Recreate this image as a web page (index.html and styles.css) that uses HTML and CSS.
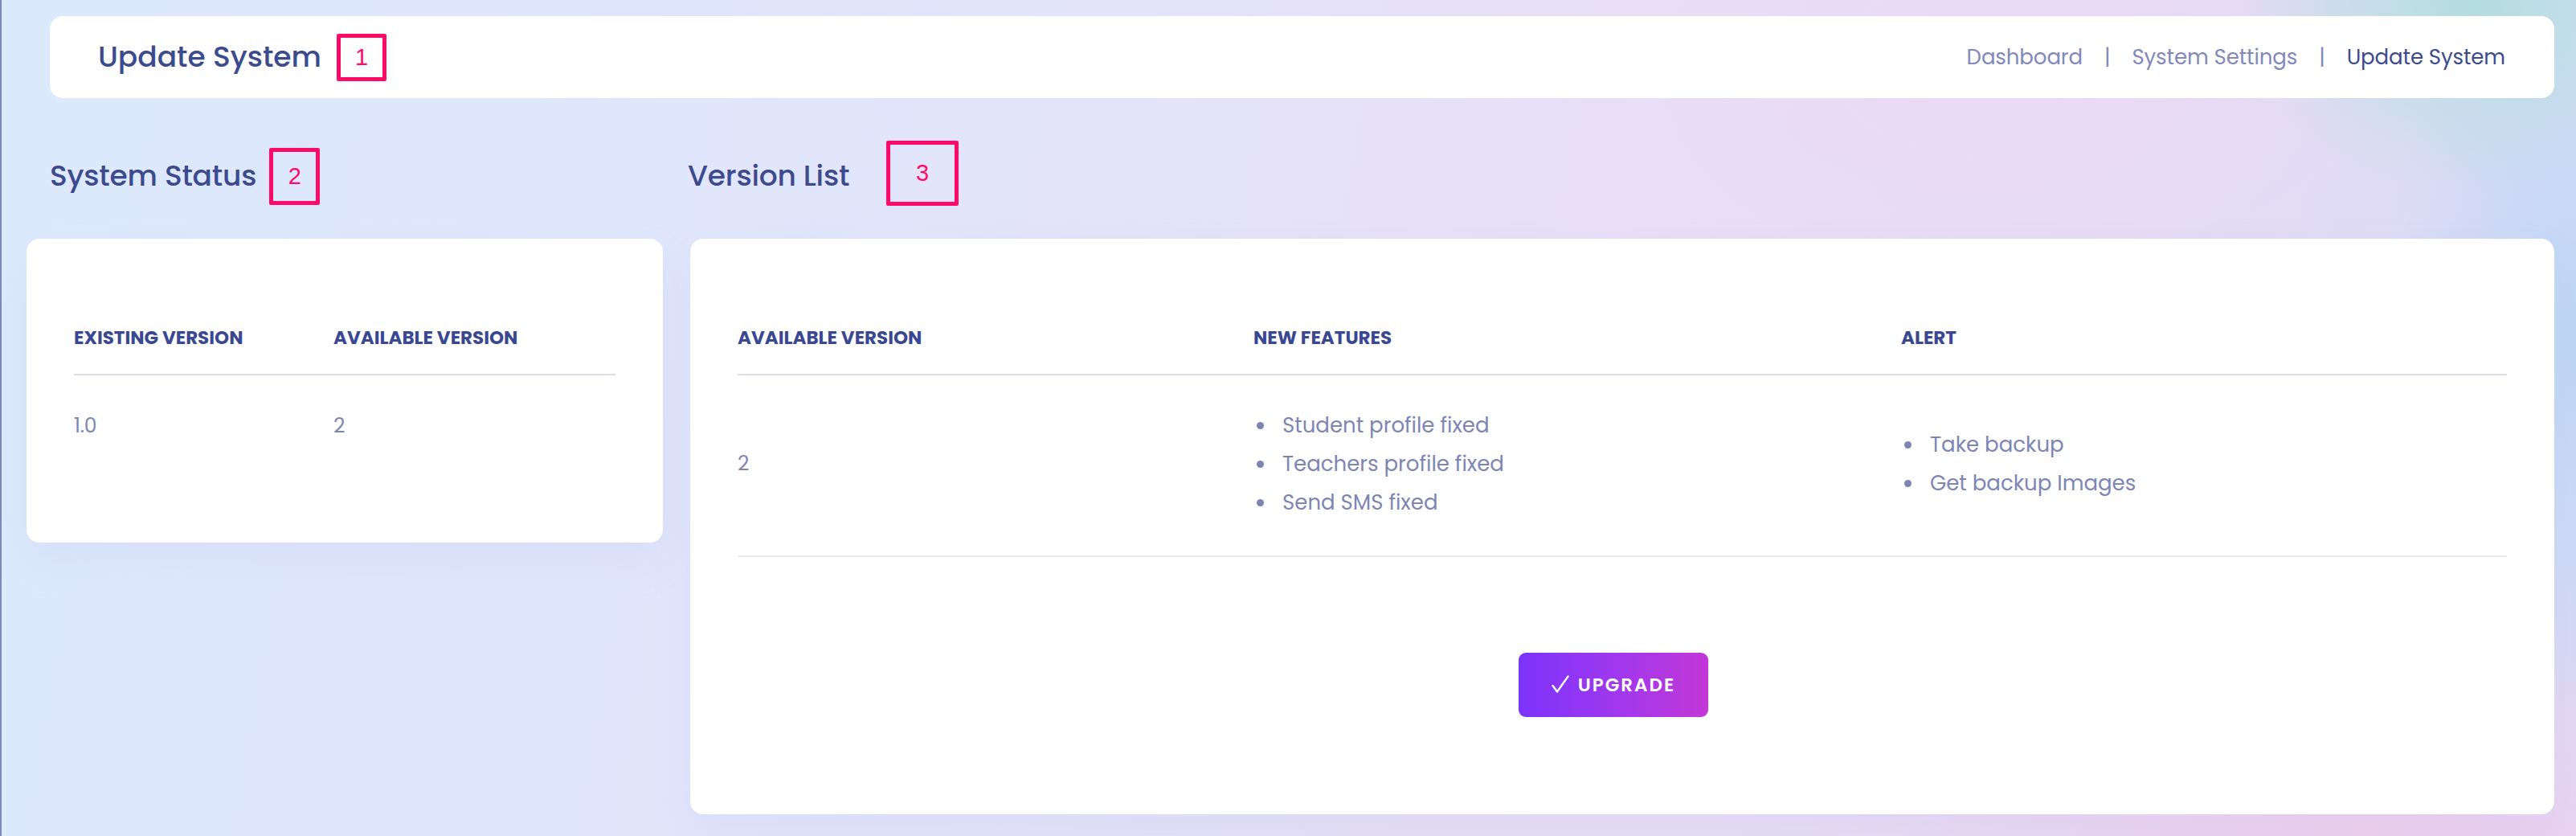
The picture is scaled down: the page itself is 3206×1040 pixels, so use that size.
FILE: index.html
```html
<!DOCTYPE html>
<html lang="en">
<head>
<meta charset="utf-8">
<title>Update System</title>
<link rel="stylesheet" href="styles.css">
</head>
<body>
<div class="page">
  <header class="topbar">
    <div class="title-wrap">
      <h1 class="page-title">Update System</h1>
      <span class="tag tag-1">1</span>
    </div>
    <nav class="crumbs">
      <a class="crumb">Dashboard</a>
      <span class="sep">|</span>
      <a class="crumb">System Settings</a>
      <span class="sep">|</span>
      <span class="crumb current">Update System</span>
    </nav>
  </header>

  <main class="columns">
    <section class="col col-status">
      <div class="section-head head-status">
        <h2 class="section-title">System Status</h2>
        <span class="tag tag-2">2</span>
      </div>
      <div class="card card-status">
        <table class="data status-table">
          <thead>
            <tr><th class="c-existing">EXISTING VERSION</th><th>AVAILABLE VERSION</th></tr>
          </thead>
          <tbody>
            <tr><td>1.0</td><td>2</td></tr>
          </tbody>
        </table>
      </div>
    </section>

    <section class="col col-versions">
      <div class="section-head head-versions">
        <h2 class="section-title">Version List</h2>
        <span class="tag tag-3">3</span>
      </div>
      <div class="card card-versions">
        <table class="data version-table">
          <thead>
            <tr><th class="c-ver">AVAILABLE VERSION</th><th class="c-feat">NEW FEATURES</th><th>ALERT</th></tr>
          </thead>
          <tbody>
            <tr>
              <td>2</td>
              <td>
                <ul class="bullets">
                  <li>Student profile fixed</li>
                  <li>Teachers profile fixed</li>
                  <li>Send SMS fixed</li>
                </ul>
              </td>
              <td>
                <ul class="bullets">
                  <li>Take backup</li>
                  <li>Get backup Images</li>
                </ul>
              </td>
            </tr>
          </tbody>
        </table>
        <div class="actions">
          <button class="btn-upgrade" type="button">
            <svg class="check" width="22" height="22" viewBox="0 0 22 22" aria-hidden="true">
              <polyline points="1.5,13 7,20.5 20.5,1.5" fill="none" stroke="#ffffff" stroke-width="2.4" stroke-linecap="round" stroke-linejoin="round"/>
            </svg>
            <span>UPGRADE</span>
          </button>
        </div>
      </div>
    </section>
  </main>
</div>
</body>
</html>
```

FILE: styles.css
```css
html, body {
  margin: 0;
  padding: 0;
  height: 100%;
}

body {
  font-family: "Poppins", "Inter", "Noto Sans", sans-serif;
  border-left: 2px solid #7f87b6;
  box-sizing: border-box;
  overflow: hidden;
  background:
    radial-gradient(ellipse 300px 240px at 96% 0%, rgba(176, 222, 222, 0.95), rgba(176, 222, 222, 0) 100%),
    radial-gradient(ellipse 240px 480px at 100% 40%, rgba(188, 214, 246, 0.95), rgba(188, 214, 246, 0) 100%),
    radial-gradient(ellipse 700px 300px at 92% 100%, rgba(241, 206, 238, 0.95), rgba(241, 206, 238, 0) 100%),
    radial-gradient(ellipse 500px 260px at 78% 8%, rgba(236, 216, 246, 0.9), rgba(236, 216, 246, 0) 100%),
    linear-gradient(100deg, #dce9fd 0%, #dfe7fc 20%, #e3e4fa 40%, #e8def6 62%, #e6dcf5 78%, #dadcf6 100%);
}

.page {
  padding: 20px 27px 0 31px;
}

/* ---------- top bar ---------- */
.topbar {
  margin-left: 29px;
  height: 102px;
  background: #ffffff;
  border-radius: 16px;
  display: flex;
  align-items: center;
  justify-content: space-between;
  padding: 0 60px;
  box-sizing: border-box;
}

.title-wrap {
  display: flex;
  align-items: center;
}

.page-title {
  margin: 0;
  font-size: 36px;
  font-weight: 500;
  color: #3c4a8e;
  letter-spacing: 0;
  line-height: 50px;
}

.crumbs {
  display: flex;
  align-items: center;
  font-size: 26px;
  line-height: 40px;
  letter-spacing: -0.1px;
  padding-right: 1px;
}

.crumb {
  color: #8189b8;
}

.crumb.current {
  color: #3c4a8e;
}

.sep {
  color: #8189b8;
  margin: 0 27px;
  font-size: 26px;
}

/* ---------- annotation tags ---------- */
.tag {
  box-sizing: border-box;
  border: 5px solid #ff0a68;
  border-radius: 2px;
  color: #ff0a68;
  font-family: "Liberation Sans", Arial, sans-serif;
  font-size: 29px;
  display: flex;
  align-items: center;
  justify-content: center;
}

.tag-1 {
  width: 62px;
  height: 59px;
  margin-left: 19px;
}

.tag-2 {
  width: 63px;
  height: 71px;
  margin-left: 16px;
}

.tag-3 {
  width: 90px;
  height: 81px;
  margin-left: 46px;
  margin-bottom: 8px;
}

/* ---------- columns ---------- */
.columns {
  display: flex;
  gap: 34px;
}

.col-status {
  width: 792px;
  flex: none;
}

.col-versions {
  flex: 1;
}

.section-head {
  display: flex;
  align-items: center;
  height: 86px;
  margin-top: 54px;
  margin-bottom: 35px;
}

.head-status {
  padding-left: 29px;
}

.head-versions {
  margin-left: -3px;
}

.section-title {
  margin: 0;
  font-size: 36px;
  font-weight: 500;
  color: #3c4a8e;
  letter-spacing: -0.2px;
  line-height: 50px;
}

/* ---------- cards ---------- */
.card {
  background: #ffffff;
  border-radius: 16px;
  box-sizing: border-box;
  padding: 106px 59px 0;
  box-shadow: 0 24px 50px rgba(170, 178, 230, 0.14);
}

.card-status {
  height: 378px;
}

.card-versions {
  height: 716px;
}

/* ---------- tables ---------- */
.data {
  width: 100%;
  border-collapse: collapse;
}

.data th {
  text-align: left;
  font-size: 23px;
  font-weight: 700;
  color: #3a4891;
  letter-spacing: 0;
  line-height: 34px;
  padding: 0 0 28px;
  border-bottom: 2px solid #dcdde8;
}

.data td {
  font-size: 25px;
  color: #7d86b3;
  line-height: 34px;
  letter-spacing: -0.3px;
  vertical-align: middle;
}

.status-table td {
  padding: 46px 0 0;
}

.status-table .c-existing {
  width: 323px;
}

.version-table td {
  padding: 38px 0 42px;
  border-bottom: 2px solid #ecedf4;
}

.version-table .c-ver {
  width: 642px;
}

.version-table .c-feat {
  width: 806px;
}

.bullets {
  list-style: none;
  margin: 0;
  padding: 0;
}

.bullets li {
  display: flex;
  align-items: center;
  font-size: 26px;
  line-height: 48px;
  letter-spacing: 0;
}

.bullets li::before {
  content: "";
  width: 9px;
  height: 9px;
  border-radius: 50%;
  background: #7d86b3;
  margin-left: 4px;
  margin-right: 23px;
  flex: none;
}

/* ---------- action ---------- */
.actions {
  display: flex;
  justify-content: center;
  padding-top: 119px;
  padding-right: 22px;
}

.btn-upgrade {
  width: 236px;
  height: 80px;
  border: none;
  border-radius: 9px;
  background: linear-gradient(90deg, #7c33fc 0%, #9e38ee 50%, #c337d7 100%);
  color: #ffffff;
  font-family: "Poppins", "Inter", "Noto Sans", sans-serif;
  font-size: 23px;
  font-weight: 600;
  letter-spacing: 2px;
  display: flex;
  align-items: center;
  justify-content: center;
  gap: 11px;
  padding: 0;
}

.check {
  flex: none;
  margin-top: -3px;
}
```
